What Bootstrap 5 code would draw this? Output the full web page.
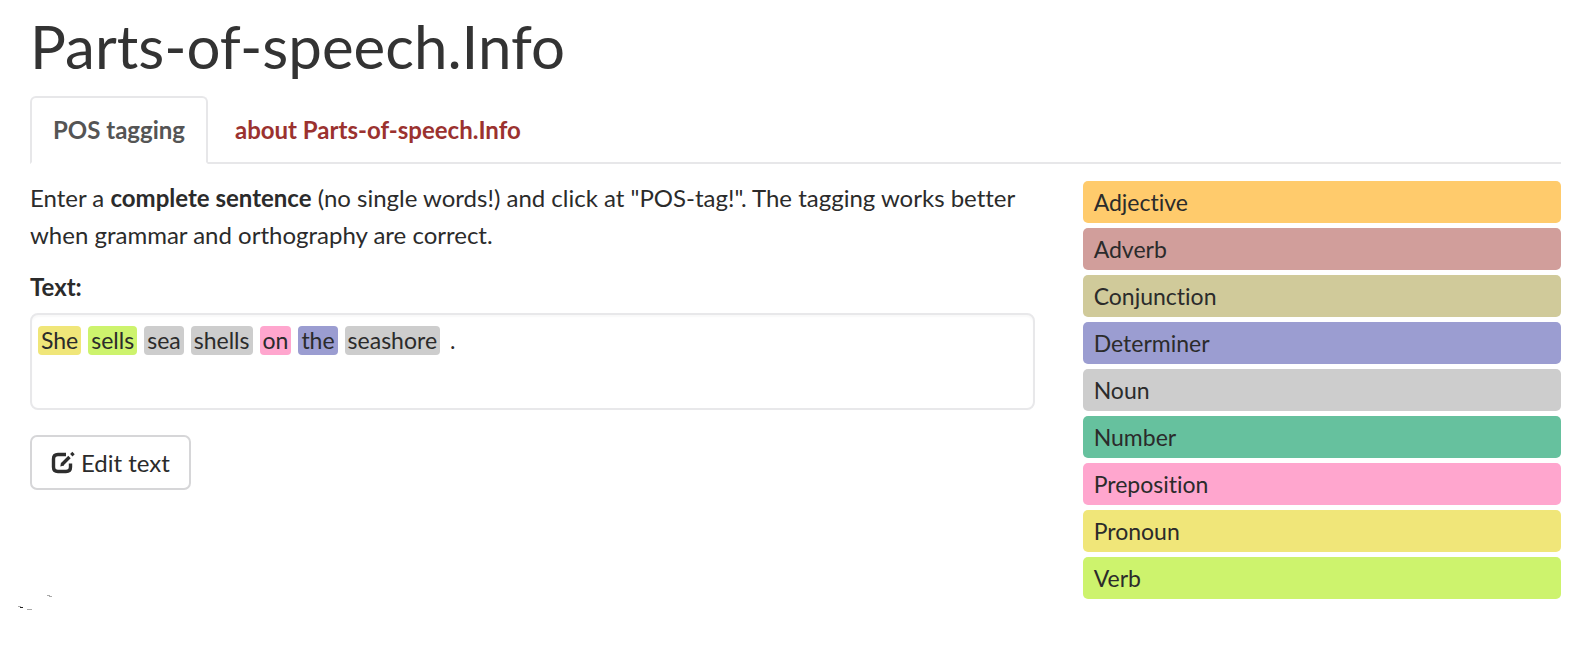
<!DOCTYPE html>
<html lang="en">
<head>
<meta charset="utf-8">
<meta name="viewport" content="width=device-width, initial-scale=1">
<title>Parts-of-speech.Info</title>
<link href="https://cdn.jsdelivr.net/npm/bootstrap@5.3.0/dist/css/bootstrap.min.css" rel="stylesheet">
<style>
  body { font-family: "Trebuchet MS", Lato, sans-serif; font-size: 24px; line-height: 37px; color: #2b2b2b; background: #fff; font-variant-ligatures: none; }
  .page { padding: 11px 18px 0 30px; }
  .site-title { font-size: 60px; line-height: 70px; font-weight: 400; color: #333; margin-bottom: 15px; }
  .nav-tabs { border-bottom: 2px solid #e7e7e9; margin-bottom: 15px; --bs-nav-tabs-border-width: 2px; }
  .nav-tabs .nav-link { padding: 13px 21px 14px; font-weight: 700; color: #9b322f; border-radius: 6px 6px 0 0; }
  .nav-tabs .nav-item + .nav-item { margin-left: 4px; }
  .nav-tabs .nav-link.active { color: #555; border-color: #e7e7e9 #e7e7e9 #fff; }
  .intro { margin-bottom: 15px; }
  .tagged { font-size: 23px; line-height: 29px; min-height: 97px; padding: 11px 6px; border: 2px solid #e8e8ea; border-radius: 8px; gap: 7px; box-shadow: inset 0 2px 2px #f9f9f9; color: #2b2b2b; }
  .word { padding: 0 3px; border-radius: 4px; }
  .btn-edit { --bs-btn-font-size: 24px; --bs-btn-line-height: 37px; --bs-btn-padding-x: 19px; --bs-btn-padding-y: 7px; --bs-btn-color: #2b2b2b; --bs-btn-border-color: #d6d6d8; --bs-btn-border-width: 2px; --bs-btn-border-radius: 7px; --bs-btn-hover-bg: #eee; margin-top: 25px; gap: 6px; }
  .legend { gap: 5px; padding-top: 2px; font-size: 23px; }
  .legend li { line-height: 42px; padding: 0 11px; border-radius: 5px; }
  .adjective { background: #ffcb6c; } .adverb { background: #d19e9b; } .conjunction { background: #d0ca9a; }
  .determiner { background: #9b9dd1; } .noun { background: #cdcdcd; } .number { background: #66c19e; }
  .preposition { background: #ffa6ce; } .pronoun { background: #f0e679; } .verb { background: #cdf36d; }
  .specks { margin: 104px 0 0 -12px; }
</style>
</head>
<body>
<div class="container-fluid page overflow-hidden">
  <h1 class="site-title">Parts-of-speech.Info</h1>
  <ul class="nav nav-tabs">
    <li class="nav-item"><a class="nav-link active" aria-current="page" href="#">POS tagging</a></li>
    <li class="nav-item"><a class="nav-link" href="#about">about Parts-of-speech.Info</a></li>
  </ul>
  <div class="row gx-5">
    <main class="col-8">
      <p class="intro">Enter a <strong>complete sentence</strong> (no single words!) and click at "POS-tag!". The tagging works better when grammar and orthography are correct.</p>
      <div class="fw-bold mb-2" id="text-label">Text:</div>
      <div class="form-control tagged d-flex flex-wrap align-content-start" role="group" aria-labelledby="text-label">
        <span class="word pronoun">She</span>
        <span class="word verb">sells</span>
        <span class="word noun">sea</span>
        <span class="word noun">shells</span>
        <span class="word preposition">on</span>
        <span class="word determiner">the</span>
        <span class="word noun">seashore</span>
        <span class="word">.</span>
      </div>
      <button type="button" class="btn btn-edit d-inline-flex align-items-center">
        <svg width="24" height="24" viewBox="0 0 24 24" fill="none" stroke="#2e2e2e" aria-hidden="true">
          <path d="M15 3.500H7Q2.500 3.500 2.500 8V16Q2.500 20.500 7 20.500H15Q19.500 20.500 19.500 16V12.500" stroke-width="3.400"/>
          <path d="M11 13.500L18.500 6M20.300 4.200L22.500 2" stroke-width="3.400"/>
          <path d="M9.300 15.500L10 11.500L13 14.500Z" fill="#2e2e2e" stroke="none"/>
        </svg>
        Edit text
      </button>
      <svg class="specks d-block" width="36" height="18" viewBox="0 0 36 18" aria-hidden="true">
        <path d="M0 12h3v1H0zM9 15h5v1H9zM29 1h3v1h-3zM31 2h3v1h-3z" fill="#aaa"/>
        <path d="M2 13h3v1H2z" fill="#222"/>
      </svg>
    </main>
    <aside class="col-4">
      <ul class="legend list-unstyled d-flex flex-column mb-0">
        <li class="adjective">Adjective</li>
        <li class="adverb">Adverb</li>
        <li class="conjunction">Conjunction</li>
        <li class="determiner">Determiner</li>
        <li class="noun">Noun</li>
        <li class="number">Number</li>
        <li class="preposition">Preposition</li>
        <li class="pronoun">Pronoun</li>
        <li class="verb">Verb</li>
      </ul>
    </aside>
  </div>
</div>
<script src="https://cdn.jsdelivr.net/npm/bootstrap@5.3.0/dist/js/bootstrap.bundle.min.js"></script>
</body>
</html>
